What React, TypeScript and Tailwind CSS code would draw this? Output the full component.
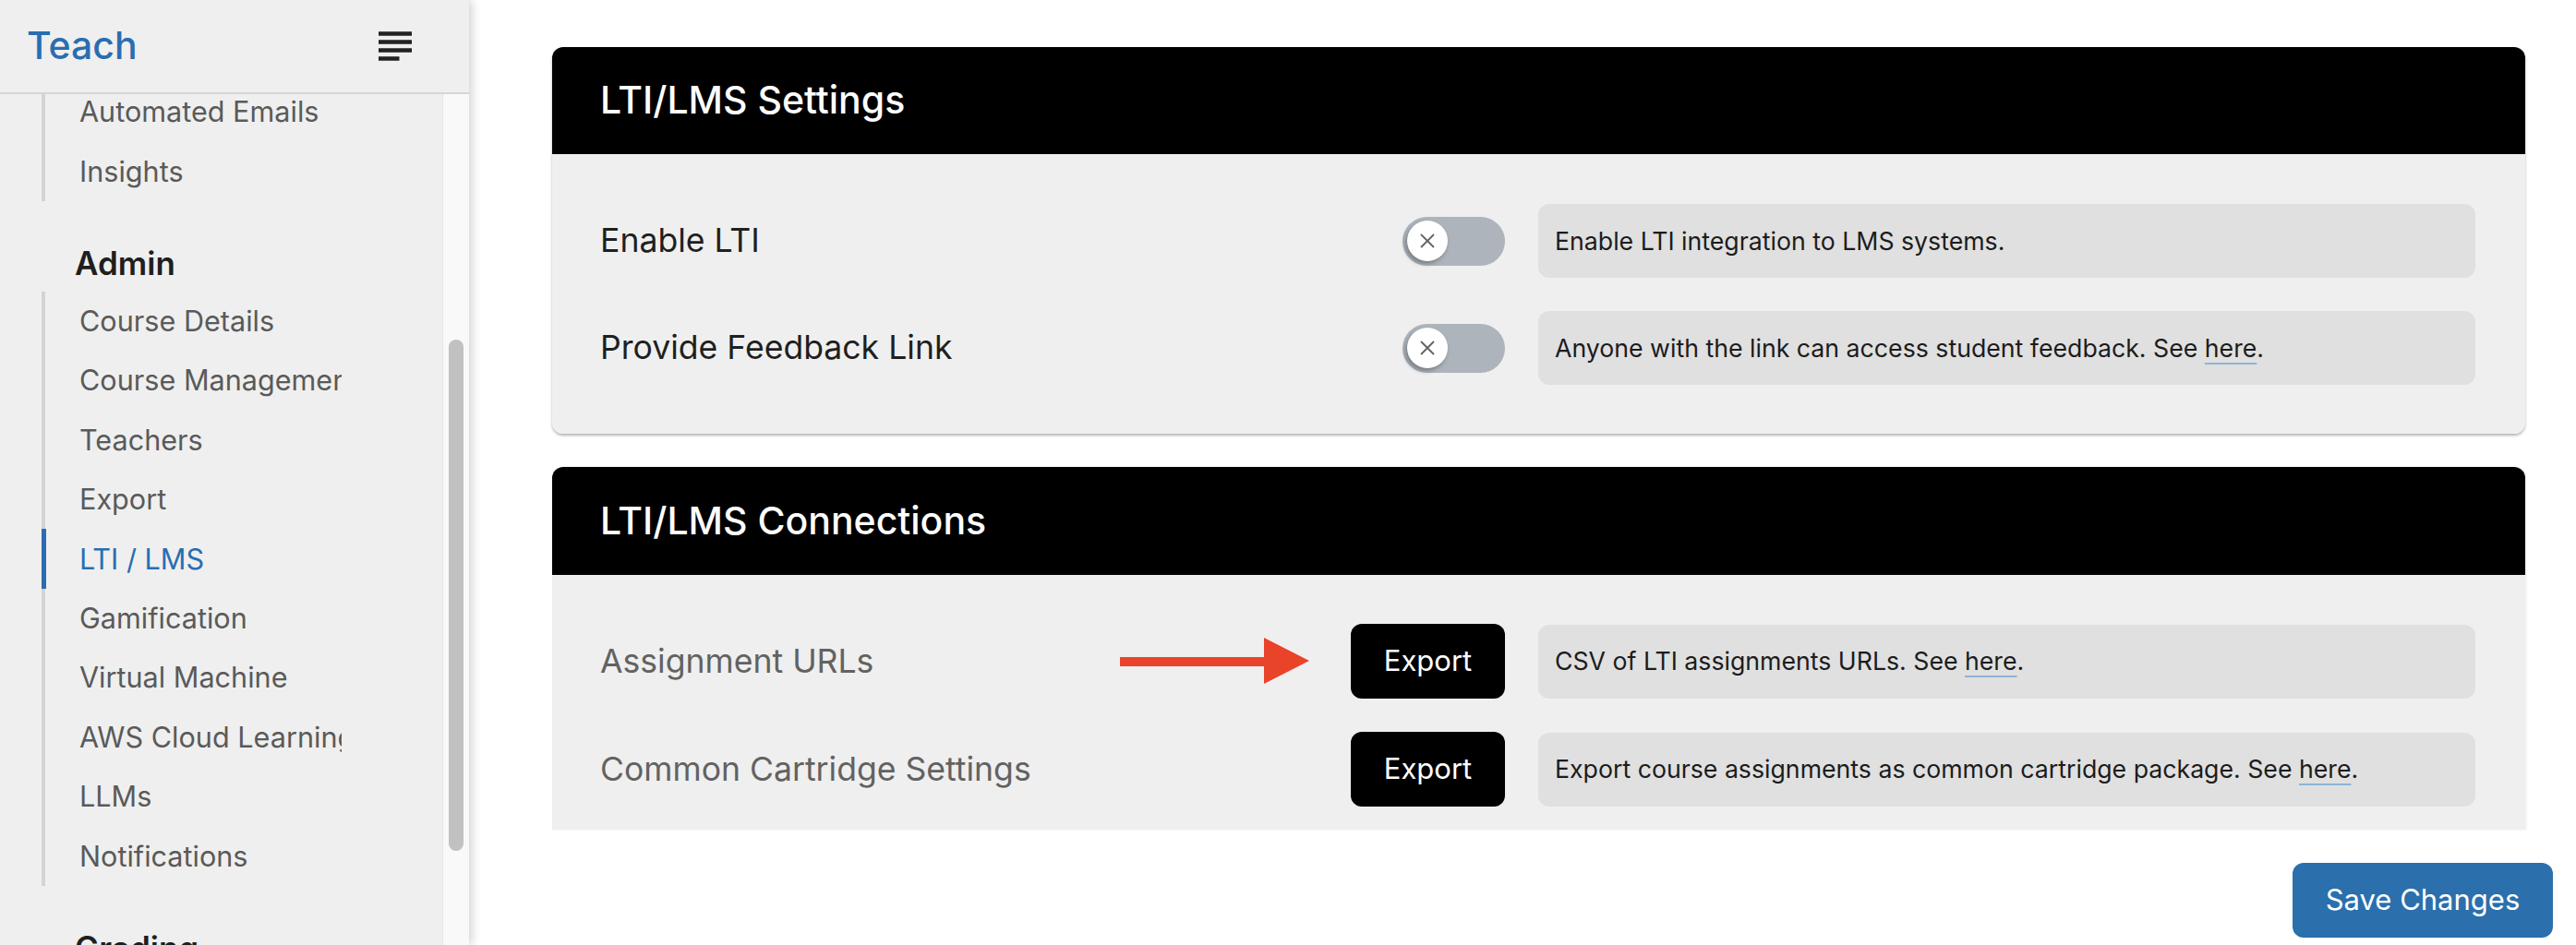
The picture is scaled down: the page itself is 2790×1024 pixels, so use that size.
import React from 'react';

const navGroups = [
  { items: ['Automated Emails', 'Insights'] },
  {
    title: 'Admin',
    items: [
      'Course Details',
      'Course Management',
      'Teachers',
      'Export',
      'LTI / LMS',
      'Gamification',
      'Virtual Machine',
      'AWS Cloud Learning',
      'LLMs',
      'Notifications',
    ],
  },
  { title: 'Grading', items: ['Rubrics'] },
];

const ACTIVE = 'LTI / LMS';

const Toggle: React.FC = () => (
  <div className="w-[111px] h-[53px] rounded-full bg-[#adb4bc] flex items-center pl-[5px]">
    <div className="w-[44px] h-[44px] rounded-full bg-white shadow-[-2px_3px_5px_rgba(0,0,0,0.3)] flex items-center justify-center">
      <svg width="20" height="20" viewBox="0 0 20 20">
        <path d="M3 3L17 17M17 3L3 17" stroke="#5f6368" strokeWidth="1.8" fill="none" />
      </svg>
    </div>
  </div>
);

const ExportButton: React.FC = () => (
  <button className="w-[167px] h-[81px] rounded-[12px] bg-black text-white text-[31px]">Export</button>
);

const Here: React.FC = () => (
  <span className="underline decoration-2 decoration-[#8fb4d4] underline-offset-[6px]">here</span>
);

const Row: React.FC<{
  label: string;
  muted?: boolean;
  arrow?: boolean;
  control: React.ReactNode;
  desc: React.ReactNode;
}> = ({ label, muted, arrow, control, desc }) => (
  <div className="flex items-center pl-[52px] pr-[54px]">
    <div className="flex-1 flex items-center justify-between">
      <span className={`text-[35.6px] ${muted ? 'text-[#626262]' : 'text-[#1f1f1f]'}`}>{label}</span>
      {arrow && (
        <svg width="205" height="50" viewBox="0 0 205 50" className="mr-[45px]">
          <rect x="0" y="21" width="157" height="10" fill="#e9432a" />
          <polygon points="156,0 205,25 156,50" fill="#e9432a" />
        </svg>
      )}
    </div>
    <div className="w-[167px] flex justify-end">{control}</div>
    <div className="ml-[36px] w-[1015px] h-[80px] rounded-[12px] bg-[#e0e0e0] flex items-center pl-[18px] text-[26.7px] text-[#1c1c1c]">
      {desc}
    </div>
  </div>
);

const Sidebar: React.FC = () => (
  <aside className="relative z-10 w-[508px] h-[1024px] shrink-0 bg-[#efefef] shadow-[3px_0_10px_rgba(0,0,0,0.18)] flex flex-col">
    <div className="h-[102px] shrink-0 border-b-2 border-[#d6d6d6] flex items-center justify-between pl-[29px] pr-[53px]">
      <span className="text-[41px] font-medium text-[#2a6db0]">Teach</span>
      <svg width="54" height="54" viewBox="0 0 24 24" fill="#222">
        <path d="M14 17H4v2h10v-2zm6-8H4v2h16V9zM4 15h16v-2H4v2zM4 5v2h16V5H4z" />
      </svg>
    </div>
    <div className="flex-1 flex overflow-hidden">
      <div className="flex-1 overflow-hidden">
        <div className="-mt-[13px]">
          {navGroups.map((group, gi) => (
            <div key={gi}>
              {group.title && (
                <div className="pl-[81px] pt-[47px] pb-[11px] leading-[40px] text-[35px] font-semibold text-[#1f1f1f]">
                  {group.title}
                </div>
              )}
              <div className="ml-[45px] border-l-4 border-[#d4d4d4]">
                {group.items.map((item) => {
                  const active = item === ACTIVE;
                  return (
                    <div
                      key={item}
                      className={`h-[64.4px] flex items-center ${
                        active ? '-ml-[4px] border-l-[5px] border-[#2a6db0] pl-[36px] text-[#2a6db0]' : 'pl-[37px] text-[#5a5a5a]'
                      }`}
                    >
                      <div className="w-[284px] overflow-hidden whitespace-nowrap text-[30.6px]">{item}</div>
                    </div>
                  );
                })}
              </div>
            </div>
          ))}
        </div>
      </div>
      <div className="w-[29px] shrink-0 bg-[#f9f9f9] border-l border-[#e6e6e6] pl-[6px]">
        <div className="mt-[266px] w-[16px] h-[554px] rounded-full bg-[#c1c1c1]" />
      </div>
    </div>
  </aside>
);

const App: React.FC = () => {
  return (
    <div className="w-[2790px] h-[1024px] flex bg-white overflow-hidden" style={{ fontFamily: 'Inter, "Noto Sans", sans-serif' }}>
      <Sidebar />
      <main className="flex-1 pl-[90px] pr-[25px] pt-[51px]">
        {/* LTI/LMS Settings */}
        <section className="mr-[30px] rounded-[12px] shadow-[0_2px_3px_rgba(0,0,0,0.3)] overflow-hidden">
          <div className="h-[116px] bg-black flex items-center pl-[52px]">
            <h2 className="text-[41px] font-medium text-white">LTI/LMS Settings</h2>
          </div>
          <div className="bg-[#efefef] pt-[54px] pb-[53px] flex flex-col gap-[36px]">
            <Row label="Enable LTI" control={<Toggle />} desc="Enable LTI integration to LMS systems." />
            <Row
              label="Provide Feedback Link"
              control={<Toggle />}
              desc={
                <span>
                  Anyone with the link can access student feedback. See <Here />.
                </span>
              }
            />
          </div>
        </section>

        {/* LTI/LMS Connections */}
        <section className="mr-[30px] mt-[36px] rounded-t-[12px] overflow-hidden shadow-[1px_0_3px_rgba(0,0,0,0.08)]">
          <div className="h-[117px] bg-black flex items-center pl-[52px]">
            <h2 className="text-[41px] font-medium text-white">LTI/LMS Connections</h2>
          </div>
          <div className="bg-[#efefef] pt-[53px] pb-[25px] flex flex-col gap-[36px]">
            <Row
              label="Assignment URLs"
              muted
              arrow
              control={<ExportButton />}
              desc={
                <span>
                  CSV of LTI assignments URLs. See <Here />.
                </span>
              }
            />
            <Row
              label="Common Cartridge Settings"
              muted
              control={<ExportButton />}
              desc={
                <span>
                  Export course assignments as common cartridge package. See <Here />.
                </span>
              }
            />
          </div>
        </section>

        <div className="flex justify-end mt-[36px]">
          <button className="w-[282px] h-[81px] rounded-[12px] bg-[#2b6fad] text-white text-[31px]">Save Changes</button>
        </div>
      </main>
    </div>
  );
};

export default App;
